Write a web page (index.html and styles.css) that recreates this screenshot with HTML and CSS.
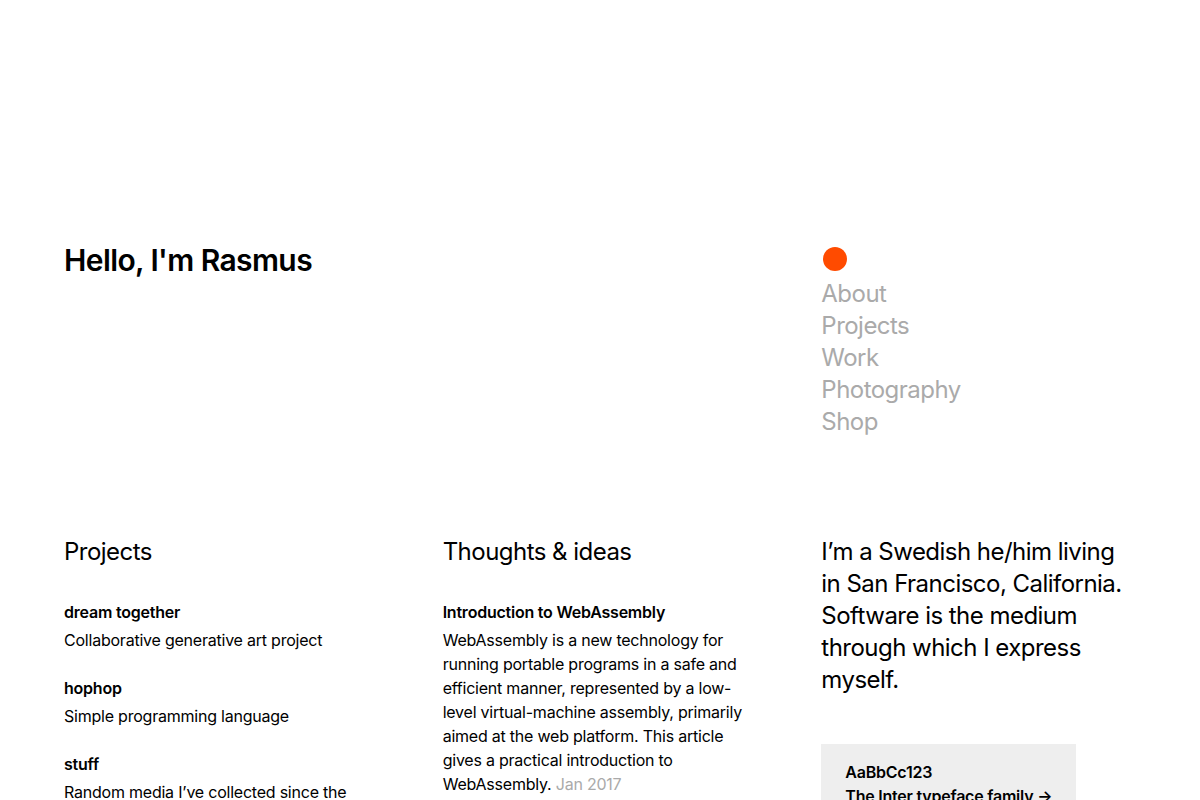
FILE: index.html
```html
<!DOCTYPE html>
<html lang="en">
<head>
<meta charset="utf-8">
<title>Rasmus Andersson</title>
<link rel="stylesheet" href="styles.css">
</head>
<body>
<div class="page">
  <header class="top">
    <h1 class="hello">Hello, I'm Rasmus</h1>
    <nav class="nav">
      <span class="dot"></span>
      <a href="#">About</a>
      <a href="#">Projects</a>
      <a href="#">Work</a>
      <a href="#">Photography</a>
      <a href="#">Shop</a>
    </nav>
  </header>
  <main class="cols">
    <section class="col">
      <h2 class="col-title">Projects</h2>
      <div class="item">
        <h3 class="item-title">dream together</h3>
        <p class="item-text">Collaborative generative art project</p>
      </div>
      <div class="item">
        <h3 class="item-title">hophop</h3>
        <p class="item-text">Simple programming language</p>
      </div>
      <div class="item">
        <h3 class="item-title">stuff</h3>
        <p class="item-text">Random media I’ve collected since the early days of the internet</p>
      </div>
    </section>
    <section class="col">
      <h2 class="col-title">Thoughts &amp; ideas</h2>
      <div class="item">
        <h3 class="item-title">Introduction to WebAssembly</h3>
        <p class="item-text">WebAssembly is a new technology for running portable programs in a safe and efficient manner, represented by a low-level virtual-machine assembly, primarily aimed at the web platform. This article gives a practical introduction to WebAssembly. <span class="date">Jan 2017</span></p>
      </div>
    </section>
    <section class="col">
      <p class="intro">I’m a Swedish he/him living in San Francisco, California. Software is the medium through which I express myself.</p>
      <a class="inter-card" href="#">
        <span class="inter-sample">AaBbCc123</span>
        <span class="inter-link">The Inter typeface family →</span>
      </a>
    </section>
  </main>
</div>
</body>
</html>
```
FILE: styles.css
```css
* { box-sizing: border-box; }
html, body { margin: 0; padding: 0; background: #fff; }
body {
  font-family: Inter, "Noto Sans", sans-serif;
  color: #000;
  font-size: 16px;
  line-height: 24px;
  letter-spacing: -0.014em;
}
a { color: inherit; text-decoration: none; }
.page { padding: 240px 64px 0; }
.top, .cols {
  display: grid;
  grid-template-columns: 1fr 1fr 1fr;
  column-gap: 64px;
}
.hello {
  grid-column: 1 / 3;
  margin: 0;
  font-size: 30px;
  line-height: 40px;
  font-weight: 600;
  letter-spacing: -0.02em;
}
.nav {
  display: flex;
  flex-direction: column;
  align-items: flex-start;
  padding-top: 7px;
}
.nav a {
  font-size: 24px;
  line-height: 32px;
  color: #aaa;
  letter-spacing: -0.022em;
}
.dot {
  width: 24px;
  height: 24px;
  border-radius: 50%;
  background: #ff4b00;
  margin: 0 0 7px 2px;
}
.cols { margin-top: 98px; }
.col-title {
  margin: 0 0 32px;
  font-size: 24px;
  line-height: 32px;
  font-weight: 400;
  letter-spacing: -0.022em;
}
.item { margin-bottom: 24px; }
.item-title {
  margin: 0 0 4px;
  font-size: 16px;
  line-height: 24px;
  font-weight: 600;
}
.item-text { margin: 0; }
.date { color: #aaa; }
.intro {
  margin: 0;
  font-size: 24px;
  line-height: 32px;
  letter-spacing: -0.022em;
}
.inter-card {
  display: flex;
  flex-direction: column;
  width: 255px;
  margin-top: 48px;
  padding: 16px 24px;
  background: #eee;
  font-weight: 600;
  white-space: nowrap;
}
```
